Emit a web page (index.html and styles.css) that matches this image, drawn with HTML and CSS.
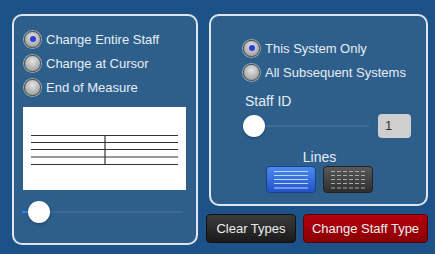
FILE: index.html
```html
<!DOCTYPE html>
<html lang="en">
<head>
    <meta charset="UTF-8">
    <title>Staff Type</title>
    <link rel="stylesheet" href="styles.css">
</head>
<body>
    <div class="panel izq">
        <div class="opcion"><span class="radio activo"></span>Change Entire Staff</div>
        <div class="opcion"><span class="radio"></span>Change at Cursor</div>
        <div class="opcion"><span class="radio"></span>End of Measure</div>
        <div class="pentagrama">
            <svg width="163" height="83" viewBox="0 0 163 83">
                <g stroke="#333" stroke-width="1.2">
                    <line x1="8" y1="28.5" x2="155" y2="28.5"/>
                    <line x1="8" y1="35.5" x2="155" y2="35.5"/>
                    <line x1="8" y1="42.5" x2="155" y2="42.5"/>
                    <line x1="8" y1="50" x2="155" y2="50"/>
                    <line x1="8" y1="57.5" x2="155" y2="57.5"/>
                    <line x1="82" y1="28.5" x2="82" y2="57.5"/>
                </g>
            </svg>
        </div>
        <div class="slider ancho">
            <div class="pista"><div class="relleno"></div></div>
            <div class="perilla"></div>
        </div>
    </div>
    <div class="columna">
        <div class="panel der">
            <div class="opcion"><span class="radio activo"></span>This System Only</div>
            <div class="opcion"><span class="radio"></span>All Subsequent Systems</div>
            <div class="etiqueta">Staff ID</div>
            <div class="fila-id">
                <div class="slider corto">
                    <div class="pista"></div>
                    <div class="perilla"></div>
                </div>
                <div class="numero">1</div>
            </div>
            <div class="lineas-titulo">Lines</div>
            <div class="lineas">
                <div class="boton-linea azul">
                    <svg width="34" height="18" viewBox="0 0 34 18">
                        <g stroke="#bcd4ff" stroke-width="1">
                            <line x1="0" y1="0.5" x2="34" y2="0.5"/>
                            <line x1="0" y1="4.5" x2="34" y2="4.5"/>
                            <line x1="0" y1="8.5" x2="34" y2="8.5"/>
                            <line x1="0" y1="12.5" x2="34" y2="12.5"/>
                            <line x1="0" y1="17" x2="34" y2="17"/>
                        </g>
                    </svg>
                </div>
                <div class="boton-linea gris">
                    <svg width="34" height="18" viewBox="0 0 34 18">
                        <g stroke="#aaa" stroke-width="1" stroke-dasharray="4 2">
                            <line x1="0" y1="0.5" x2="34" y2="0.5"/>
                            <line x1="0" y1="4.5" x2="34" y2="4.5"/>
                            <line x1="0" y1="8.5" x2="34" y2="8.5"/>
                            <line x1="0" y1="12.5" x2="34" y2="12.5"/>
                            <line x1="0" y1="17" x2="34" y2="17"/>
                        </g>
                    </svg>
                </div>
            </div>
        </div>
        <div class="botones">
            <button class="negro">Clear Types</button>
            <button class="rojo">Change Staff Type</button>
        </div>
    </div>
</body>
</html>
```

FILE: styles.css
```css
body {
    margin: 0;
    width: 435px;
    height: 254px;
    background-color: #1d5289;
    font-family: "Liberation Sans", Arial, sans-serif;
    color: #e6edf5;
    display: flex;
    gap: 11px;
    padding: 14px 0 0 12px;
    box-sizing: border-box;
    overflow: hidden;
}
.panel {
    background-color: #2e5f8b;
    border: 2px solid #dfe6ee;
    border-radius: 10px;
    box-sizing: border-box;
}
.izq {
    width: 186px;
    height: 231px;
    padding: 11px 0 0 10px;
}
.columna {
    width: 219px;
    display: flex;
    flex-direction: column;
}
.der {
    height: 192px;
    padding: 20px 0 0 32px;
}
.opcion {
    height: 24px;
    display: flex;
    align-items: center;
    font-size: 13px;
}
.radio {
    width: 15px;
    height: 15px;
    border-radius: 50%;
    border: 1px solid #555;
    background: radial-gradient(circle at 50% 35%, #e4e4e4, #a9a9a9 70%, #8c8c8c);
    box-shadow: 0 0 0 1px #9aa;
    margin-right: 5px;
    position: relative;
}
.radio.activo::after {
    content: '';
    position: absolute;
    width: 6px;
    height: 6px;
    border-radius: 50%;
    background-color: #2a3ed8;
    top: 4.5px;
    left: 4.5px;
}
.pentagrama {
    width: 163px;
    height: 83px;
    background-color: #fff;
    margin: 8px 0 0 -1px;
}
.pentagrama svg {
    display: block;
}
.slider {
    position: relative;
    height: 22px;
    display: flex;
    align-items: center;
}
.ancho {
    width: 161px;
    margin: 11px 0 0 -2px;
}
.corto {
    width: 126px;
}
.pista {
    width: 100%;
    height: 2px;
    background-color: #3d6b96;
    position: relative;
}
.relleno {
    width: 12px;
    height: 2px;
    background-color: #2f7ff0;
}
.perilla {
    position: absolute;
    width: 22px;
    height: 22px;
    border-radius: 50%;
    background-color: #fff;
    box-shadow: 0 1px 3px rgba(0, 0, 0, 0.3);
    top: 0;
}
.ancho .perilla {
    left: 6px;
}
.corto .perilla {
    left: 0;
}
.etiqueta {
    font-size: 14px;
    margin: 9px 0 0 2px;
    height: 18px;
}
.fila-id {
    display: flex;
    align-items: center;
    gap: 9px;
    margin-top: 3px;
    height: 24px;
}
.numero {
    width: 33px;
    height: 24px;
    background-color: #cfcfcf;
    border-radius: 4px;
    color: #333;
    font-size: 13px;
    line-height: 24px;
    padding-left: 7px;
    box-sizing: border-box;
}
.lineas-titulo {
    font-size: 14px;
    text-align: center;
    margin: 11px 0 0 -30px;
    height: 17px;
}
.lineas {
    display: flex;
    justify-content: center;
    gap: 7px;
    margin: 0 0 0 -30px;
}
.boton-linea {
    width: 50px;
    height: 27px;
    border-radius: 4px;
    display: flex;
    justify-content: center;
    align-items: center;
    box-sizing: border-box;
}
.boton-linea svg {
    display: block;
}
.azul {
    background: linear-gradient(#4a8cf0, #2352c8);
    border: 1px solid #1c3f8c;
}
.gris {
    background: linear-gradient(#5a5a5a, #2e2e2e);
    border: 1px solid #222;
}
.botones {
    display: flex;
    gap: 7px;
    margin-top: 8px;
    margin-left: -3px;
}
.botones button {
    height: 29px;
    border-radius: 4px;
    color: #eee;
    font-family: "Liberation Sans", Arial, sans-serif;
    font-size: 13px;
    padding: 0;
}
.negro {
    width: 90px;
    background: linear-gradient(#3c3c3c, #1a1a1a);
    border: 1px solid #111;
}
.rojo {
    width: 125px;
    background: linear-gradient(#b5000a, #8a0006);
    border: 1px solid #5a0004;
}
```
